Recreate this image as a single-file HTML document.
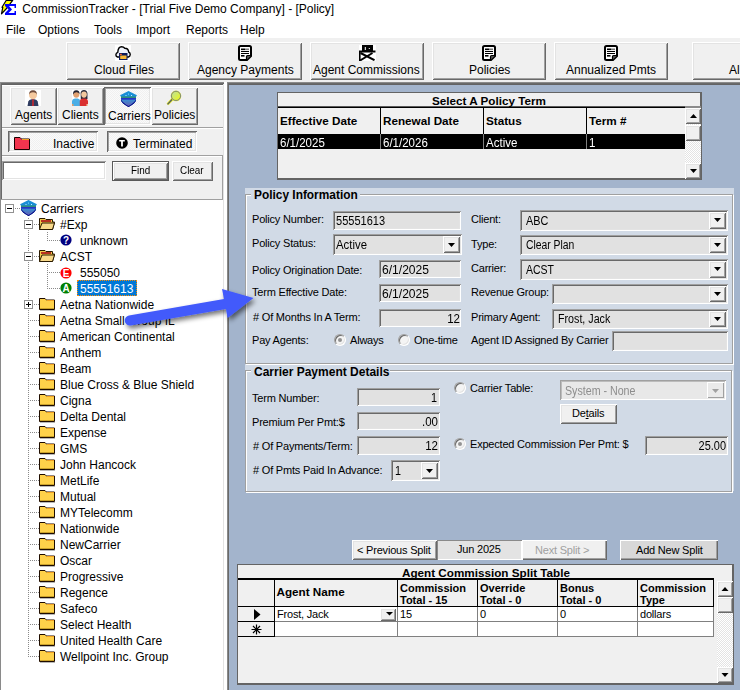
<!DOCTYPE html>
<html><head><meta charset="utf-8">
<style>
*{margin:0;padding:0;box-sizing:border-box}
html,body{width:740px;height:690px;overflow:hidden;background:#fff}
body{font-family:"Liberation Sans",sans-serif;color:#000;position:relative}
.a{position:absolute}
.t{position:absolute;white-space:nowrap;line-height:1}
.raised{background:#f0f0f0;box-shadow:inset 1px 1px #fff,inset -1px -1px #696969,inset 2px 2px #e3e3e3,inset -2px -2px #a0a0a0}
.sunken{box-shadow:inset 1px 1px #a0a0a0,inset -1px -1px #fff,inset 2px 2px #696969,inset -2px -2px #e3e3e3}
.pressed{background-color:#fafafa;background-image:linear-gradient(45deg,#f0f0f0 25%,transparent 25%,transparent 75%,#f0f0f0 75%),linear-gradient(45deg,#f0f0f0 25%,transparent 25%,transparent 75%,#f0f0f0 75%);background-size:2px 2px;background-position:0 0,1px 1px;box-shadow:inset 1px 1px #696969,inset -1px -1px #fff,inset 2px 2px #a0a0a0,inset -2px -2px #e3e3e3}
.ui{font-size:12px}
.tree{font-size:12px}
.f11{font-size:11px;letter-spacing:-0.2px}
.v12{font-size:12px;transform-origin:0 0}
.b12{font-size:11.7px;font-weight:bold}
.tb{background:#e1e1e1;box-shadow:inset 1px 1px #a0a0a0,inset -1px -1px #fff,inset 2px 2px #696969,inset -2px -2px #e3e3e3}
.etch{border:1px solid #a0a0a0;box-shadow:inset 1px 1px #fff,1px 1px #fff}
.radio{width:12px;height:12px;border-radius:6px;background:#f4f4f4;border:1px solid;border-color:#a0a0a0 #fff #fff #a0a0a0;box-shadow:inset 1px 1px #696969,inset -1px -1px #e3e3e3}
.dith{background-color:#fff;background-image:linear-gradient(45deg,#e3e3e3 25%,transparent 25%,transparent 75%,#e3e3e3 75%),linear-gradient(45deg,#e3e3e3 25%,transparent 25%,transparent 75%,#e3e3e3 75%);background-size:2px 2px;background-position:0 0,1px 1px}
</style></head><body>

<!-- title bar -->
<div class="a" style="left:0;top:0;width:740px;height:38px;background:#fff"></div>
<svg class="a" style="left:0;top:0" width="18" height="16" viewBox="0 0 18 16">
  <path d="M6.3 0.3 H12.7 L6.5 8.5 L1.5 13.8 L2.8 7.3 L2 7.3 Z" fill="#ffff00" stroke="#000" stroke-width="1.2" stroke-linejoin="round"/>
  <path d="M5 4 H16 V8 H14.5 V6 H9 L12 9.5 L8.5 13 H14.5 V11 H16 V15 H5 V13 L8.5 9.5 L5 6 Z" fill="#0000ff"/>
</svg>
<div class="t ui" style="left:22.3px;top:3px">CommissionTracker - [Trial Five Demo Company] - [Policy]</div>
<div class="t ui" style="left:6px;top:24px">File</div>
<div class="t ui" style="left:38px;top:24px">Options</div>
<div class="t ui" style="left:94px;top:24px">Tools</div>
<div class="t ui" style="left:136px;top:24px">Import</div>
<div class="t ui" style="left:186px;top:24px">Reports</div>
<div class="t ui" style="left:240px;top:24px">Help</div>

<!-- toolbar -->
<div class="a" style="left:0;top:38px;width:740px;height:44px;background:#f0f0f0"></div>
<div class="a raised" style="left:66px;top:42px;width:114px;height:38px"></div>
<div class="a raised" style="left:188px;top:42px;width:114px;height:38px"></div>
<div class="a raised" style="left:310px;top:42px;width:114px;height:38px"></div>
<div class="a raised" style="left:432px;top:42px;width:114px;height:38px"></div>
<div class="a raised" style="left:554px;top:42px;width:114px;height:38px"></div>
<div class="a raised" style="left:692px;top:42px;width:114px;height:38px"></div>
<div class="t ui" style="left:94px;top:64px">Cloud Files</div>
<div class="t ui" style="left:197px;top:64px">Agency Payments</div>
<div class="t ui" style="left:313px;top:64px">Agent Commissions</div>
<div class="t ui" style="left:469px;top:64px">Policies</div>
<div class="t ui" style="left:566px;top:64px">Annualized Pmts</div>
<div class="t ui" style="left:729px;top:64px">Al</div>


<!-- left panel -->
<div class="a" style="left:0;top:82px;width:224px;height:608px;background:#f0f0f0;box-shadow:inset 1px 1px #8a8a8a,inset 2px 2px #6a6a6a"></div>
<div class="a" style="left:1px;top:84px;width:222px;height:1px;background:#636363"></div>
<div class="a" style="left:2px;top:85px;width:221px;height:1px;background:#fff"></div>
<div class="a" style="left:223px;top:84px;width:1px;height:606px;background:#e3e3e3"></div>
<div class="a" style="left:224px;top:82px;width:3px;height:608px;background:#fff"></div>

<div class="a raised" style="left:10px;top:87px;width:47px;height:38px"></div>
<div class="a raised" style="left:57px;top:87px;width:47px;height:38px"></div>
<div class="a pressed" style="left:104px;top:87px;width:47px;height:38px"></div>
<div class="a raised" style="left:151px;top:87px;width:47px;height:38px"></div>
<div class="t ui" style="left:15px;top:109px">Agents</div>
<div class="t ui" style="left:62px;top:109px">Clients</div>
<div class="t ui" style="left:108px;top:110px">Carriers</div>
<div class="t ui" style="left:154px;top:109px">Policies</div>

<div class="a" style="left:2px;top:127px;width:221px;height:1px;background:#a0a0a0"></div>
<div class="a" style="left:2px;top:128px;width:221px;height:1px;background:#fff"></div>

<div class="a pressed" style="left:8px;top:131px;width:90px;height:21px"></div>
<div class="a pressed" style="left:107px;top:131px;width:90px;height:21px"></div>
<div class="t ui" style="left:53px;top:137.5px">Inactive</div>
<div class="t ui" style="left:133px;top:137.5px">Terminated</div>

<div class="a" style="left:2px;top:155px;width:221px;height:1px;background:#a0a0a0"></div>
<div class="a" style="left:2px;top:156px;width:221px;height:1px;background:#fff"></div>
<div class="a" style="left:222px;top:155px;width:1px;height:44px;background:#a0a0a0"></div>

<div class="a sunken" style="left:2px;top:161px;width:104px;height:19px;background:#fff"></div>
<div class="a" style="left:112px;top:161px;width:57px;height:20px;background:#5a5a5a"></div>
<div class="a raised" style="left:113px;top:162px;width:55px;height:18px"></div>
<div class="a raised" style="left:172px;top:161px;width:41px;height:20px"></div>
<div class="t" style="left:131px;top:165px;font-size:11.5px;transform:scaleX(0.86);transform-origin:0 0">Find</div>
<div class="t" style="left:180px;top:165px;font-size:11.5px;transform:scaleX(0.86);transform-origin:0 0">Clear</div>

<!-- tree -->
<div class="a" style="left:1px;top:199px;width:222px;height:491px;background:#fff;border-top:1px solid #a0a0a0"></div>
<svg class="a" style="left:0;top:0" width="224" height="690" fill="#8a8a8a"><rect x="28" y="218" width="1" height="1"/><rect x="28" y="220" width="1" height="1"/><rect x="28" y="222" width="1" height="1"/><rect x="28" y="224" width="1" height="1"/><rect x="28" y="226" width="1" height="1"/><rect x="28" y="228" width="1" height="1"/><rect x="28" y="230" width="1" height="1"/><rect x="28" y="232" width="1" height="1"/><rect x="28" y="234" width="1" height="1"/><rect x="28" y="236" width="1" height="1"/><rect x="28" y="238" width="1" height="1"/><rect x="28" y="240" width="1" height="1"/><rect x="28" y="242" width="1" height="1"/><rect x="28" y="244" width="1" height="1"/><rect x="28" y="246" width="1" height="1"/><rect x="28" y="248" width="1" height="1"/><rect x="28" y="250" width="1" height="1"/><rect x="28" y="252" width="1" height="1"/><rect x="28" y="254" width="1" height="1"/><rect x="28" y="256" width="1" height="1"/><rect x="28" y="258" width="1" height="1"/><rect x="28" y="260" width="1" height="1"/><rect x="28" y="262" width="1" height="1"/><rect x="28" y="264" width="1" height="1"/><rect x="28" y="266" width="1" height="1"/><rect x="28" y="268" width="1" height="1"/><rect x="28" y="270" width="1" height="1"/><rect x="28" y="272" width="1" height="1"/><rect x="28" y="274" width="1" height="1"/><rect x="28" y="276" width="1" height="1"/><rect x="28" y="278" width="1" height="1"/><rect x="28" y="280" width="1" height="1"/><rect x="28" y="282" width="1" height="1"/><rect x="28" y="284" width="1" height="1"/><rect x="28" y="286" width="1" height="1"/><rect x="28" y="288" width="1" height="1"/><rect x="28" y="290" width="1" height="1"/><rect x="28" y="292" width="1" height="1"/><rect x="28" y="294" width="1" height="1"/><rect x="28" y="296" width="1" height="1"/><rect x="28" y="298" width="1" height="1"/><rect x="28" y="300" width="1" height="1"/><rect x="28" y="302" width="1" height="1"/><rect x="28" y="304" width="1" height="1"/><rect x="28" y="306" width="1" height="1"/><rect x="28" y="308" width="1" height="1"/><rect x="28" y="310" width="1" height="1"/><rect x="28" y="312" width="1" height="1"/><rect x="28" y="314" width="1" height="1"/><rect x="28" y="316" width="1" height="1"/><rect x="28" y="318" width="1" height="1"/><rect x="28" y="320" width="1" height="1"/><rect x="28" y="322" width="1" height="1"/><rect x="28" y="324" width="1" height="1"/><rect x="28" y="326" width="1" height="1"/><rect x="28" y="328" width="1" height="1"/><rect x="28" y="330" width="1" height="1"/><rect x="28" y="332" width="1" height="1"/><rect x="28" y="334" width="1" height="1"/><rect x="28" y="336" width="1" height="1"/><rect x="28" y="338" width="1" height="1"/><rect x="28" y="340" width="1" height="1"/><rect x="28" y="342" width="1" height="1"/><rect x="28" y="344" width="1" height="1"/><rect x="28" y="346" width="1" height="1"/><rect x="28" y="348" width="1" height="1"/><rect x="28" y="350" width="1" height="1"/><rect x="28" y="352" width="1" height="1"/><rect x="28" y="354" width="1" height="1"/><rect x="28" y="356" width="1" height="1"/><rect x="28" y="358" width="1" height="1"/><rect x="28" y="360" width="1" height="1"/><rect x="28" y="362" width="1" height="1"/><rect x="28" y="364" width="1" height="1"/><rect x="28" y="366" width="1" height="1"/><rect x="28" y="368" width="1" height="1"/><rect x="28" y="370" width="1" height="1"/><rect x="28" y="372" width="1" height="1"/><rect x="28" y="374" width="1" height="1"/><rect x="28" y="376" width="1" height="1"/><rect x="28" y="378" width="1" height="1"/><rect x="28" y="380" width="1" height="1"/><rect x="28" y="382" width="1" height="1"/><rect x="28" y="384" width="1" height="1"/><rect x="28" y="386" width="1" height="1"/><rect x="28" y="388" width="1" height="1"/><rect x="28" y="390" width="1" height="1"/><rect x="28" y="392" width="1" height="1"/><rect x="28" y="394" width="1" height="1"/><rect x="28" y="396" width="1" height="1"/><rect x="28" y="398" width="1" height="1"/><rect x="28" y="400" width="1" height="1"/><rect x="28" y="402" width="1" height="1"/><rect x="28" y="404" width="1" height="1"/><rect x="28" y="406" width="1" height="1"/><rect x="28" y="408" width="1" height="1"/><rect x="28" y="410" width="1" height="1"/><rect x="28" y="412" width="1" height="1"/><rect x="28" y="414" width="1" height="1"/><rect x="28" y="416" width="1" height="1"/><rect x="28" y="418" width="1" height="1"/><rect x="28" y="420" width="1" height="1"/><rect x="28" y="422" width="1" height="1"/><rect x="28" y="424" width="1" height="1"/><rect x="28" y="426" width="1" height="1"/><rect x="28" y="428" width="1" height="1"/><rect x="28" y="430" width="1" height="1"/><rect x="28" y="432" width="1" height="1"/><rect x="28" y="434" width="1" height="1"/><rect x="28" y="436" width="1" height="1"/><rect x="28" y="438" width="1" height="1"/><rect x="28" y="440" width="1" height="1"/><rect x="28" y="442" width="1" height="1"/><rect x="28" y="444" width="1" height="1"/><rect x="28" y="446" width="1" height="1"/><rect x="28" y="448" width="1" height="1"/><rect x="28" y="450" width="1" height="1"/><rect x="28" y="452" width="1" height="1"/><rect x="28" y="454" width="1" height="1"/><rect x="28" y="456" width="1" height="1"/><rect x="28" y="458" width="1" height="1"/><rect x="28" y="460" width="1" height="1"/><rect x="28" y="462" width="1" height="1"/><rect x="28" y="464" width="1" height="1"/><rect x="28" y="466" width="1" height="1"/><rect x="28" y="468" width="1" height="1"/><rect x="28" y="470" width="1" height="1"/><rect x="28" y="472" width="1" height="1"/><rect x="28" y="474" width="1" height="1"/><rect x="28" y="476" width="1" height="1"/><rect x="28" y="478" width="1" height="1"/><rect x="28" y="480" width="1" height="1"/><rect x="28" y="482" width="1" height="1"/><rect x="28" y="484" width="1" height="1"/><rect x="28" y="486" width="1" height="1"/><rect x="28" y="488" width="1" height="1"/><rect x="28" y="490" width="1" height="1"/><rect x="28" y="492" width="1" height="1"/><rect x="28" y="494" width="1" height="1"/><rect x="28" y="496" width="1" height="1"/><rect x="28" y="498" width="1" height="1"/><rect x="28" y="500" width="1" height="1"/><rect x="28" y="502" width="1" height="1"/><rect x="28" y="504" width="1" height="1"/><rect x="28" y="506" width="1" height="1"/><rect x="28" y="508" width="1" height="1"/><rect x="28" y="510" width="1" height="1"/><rect x="28" y="512" width="1" height="1"/><rect x="28" y="514" width="1" height="1"/><rect x="28" y="516" width="1" height="1"/><rect x="28" y="518" width="1" height="1"/><rect x="28" y="520" width="1" height="1"/><rect x="28" y="522" width="1" height="1"/><rect x="28" y="524" width="1" height="1"/><rect x="28" y="526" width="1" height="1"/><rect x="28" y="528" width="1" height="1"/><rect x="28" y="530" width="1" height="1"/><rect x="28" y="532" width="1" height="1"/><rect x="28" y="534" width="1" height="1"/><rect x="28" y="536" width="1" height="1"/><rect x="28" y="538" width="1" height="1"/><rect x="28" y="540" width="1" height="1"/><rect x="28" y="542" width="1" height="1"/><rect x="28" y="544" width="1" height="1"/><rect x="28" y="546" width="1" height="1"/><rect x="28" y="548" width="1" height="1"/><rect x="28" y="550" width="1" height="1"/><rect x="28" y="552" width="1" height="1"/><rect x="28" y="554" width="1" height="1"/><rect x="28" y="556" width="1" height="1"/><rect x="28" y="558" width="1" height="1"/><rect x="28" y="560" width="1" height="1"/><rect x="28" y="562" width="1" height="1"/><rect x="28" y="564" width="1" height="1"/><rect x="28" y="566" width="1" height="1"/><rect x="28" y="568" width="1" height="1"/><rect x="28" y="570" width="1" height="1"/><rect x="28" y="572" width="1" height="1"/><rect x="28" y="574" width="1" height="1"/><rect x="28" y="576" width="1" height="1"/><rect x="28" y="578" width="1" height="1"/><rect x="28" y="580" width="1" height="1"/><rect x="28" y="582" width="1" height="1"/><rect x="28" y="584" width="1" height="1"/><rect x="28" y="586" width="1" height="1"/><rect x="28" y="588" width="1" height="1"/><rect x="28" y="590" width="1" height="1"/><rect x="28" y="592" width="1" height="1"/><rect x="28" y="594" width="1" height="1"/><rect x="28" y="596" width="1" height="1"/><rect x="28" y="598" width="1" height="1"/><rect x="28" y="600" width="1" height="1"/><rect x="28" y="602" width="1" height="1"/><rect x="28" y="604" width="1" height="1"/><rect x="28" y="606" width="1" height="1"/><rect x="28" y="608" width="1" height="1"/><rect x="28" y="610" width="1" height="1"/><rect x="28" y="612" width="1" height="1"/><rect x="28" y="614" width="1" height="1"/><rect x="28" y="616" width="1" height="1"/><rect x="28" y="618" width="1" height="1"/><rect x="28" y="620" width="1" height="1"/><rect x="28" y="622" width="1" height="1"/><rect x="28" y="624" width="1" height="1"/><rect x="28" y="626" width="1" height="1"/><rect x="28" y="628" width="1" height="1"/><rect x="28" y="630" width="1" height="1"/><rect x="28" y="632" width="1" height="1"/><rect x="28" y="634" width="1" height="1"/><rect x="28" y="636" width="1" height="1"/><rect x="28" y="638" width="1" height="1"/><rect x="28" y="640" width="1" height="1"/><rect x="28" y="642" width="1" height="1"/><rect x="28" y="644" width="1" height="1"/><rect x="28" y="646" width="1" height="1"/><rect x="28" y="648" width="1" height="1"/><rect x="28" y="650" width="1" height="1"/><rect x="28" y="652" width="1" height="1"/><rect x="28" y="654" width="1" height="1"/><rect x="28" y="656" width="1" height="1"/><rect x="47" y="232" width="1" height="1"/><rect x="47" y="234" width="1" height="1"/><rect x="47" y="236" width="1" height="1"/><rect x="47" y="238" width="1" height="1"/><rect x="47" y="240" width="1" height="1"/><rect x="47" y="264" width="1" height="1"/><rect x="47" y="266" width="1" height="1"/><rect x="47" y="268" width="1" height="1"/><rect x="47" y="270" width="1" height="1"/><rect x="47" y="272" width="1" height="1"/><rect x="47" y="274" width="1" height="1"/><rect x="47" y="276" width="1" height="1"/><rect x="47" y="278" width="1" height="1"/><rect x="47" y="280" width="1" height="1"/><rect x="47" y="282" width="1" height="1"/><rect x="47" y="284" width="1" height="1"/><rect x="47" y="286" width="1" height="1"/><rect x="47" y="288" width="1" height="1"/><rect x="15" y="208" width="1" height="1"/><rect x="17" y="208" width="1" height="1"/><rect x="19" y="208" width="1" height="1"/><rect x="34" y="224" width="1" height="1"/><rect x="36" y="224" width="1" height="1"/><rect x="38" y="224" width="1" height="1"/><rect x="49" y="240" width="1" height="1"/><rect x="51" y="240" width="1" height="1"/><rect x="53" y="240" width="1" height="1"/><rect x="55" y="240" width="1" height="1"/><rect x="57" y="240" width="1" height="1"/><rect x="59" y="240" width="1" height="1"/><rect x="34" y="256" width="1" height="1"/><rect x="36" y="256" width="1" height="1"/><rect x="38" y="256" width="1" height="1"/><rect x="49" y="272" width="1" height="1"/><rect x="51" y="272" width="1" height="1"/><rect x="53" y="272" width="1" height="1"/><rect x="55" y="272" width="1" height="1"/><rect x="57" y="272" width="1" height="1"/><rect x="59" y="272" width="1" height="1"/><rect x="49" y="288" width="1" height="1"/><rect x="51" y="288" width="1" height="1"/><rect x="53" y="288" width="1" height="1"/><rect x="55" y="288" width="1" height="1"/><rect x="57" y="288" width="1" height="1"/><rect x="59" y="288" width="1" height="1"/><rect x="34" y="304" width="1" height="1"/><rect x="36" y="304" width="1" height="1"/><rect x="38" y="304" width="1" height="1"/><rect x="30" y="320" width="1" height="1"/><rect x="32" y="320" width="1" height="1"/><rect x="34" y="320" width="1" height="1"/><rect x="36" y="320" width="1" height="1"/><rect x="38" y="320" width="1" height="1"/><rect x="30" y="336" width="1" height="1"/><rect x="32" y="336" width="1" height="1"/><rect x="34" y="336" width="1" height="1"/><rect x="36" y="336" width="1" height="1"/><rect x="38" y="336" width="1" height="1"/><rect x="30" y="352" width="1" height="1"/><rect x="32" y="352" width="1" height="1"/><rect x="34" y="352" width="1" height="1"/><rect x="36" y="352" width="1" height="1"/><rect x="38" y="352" width="1" height="1"/><rect x="30" y="368" width="1" height="1"/><rect x="32" y="368" width="1" height="1"/><rect x="34" y="368" width="1" height="1"/><rect x="36" y="368" width="1" height="1"/><rect x="38" y="368" width="1" height="1"/><rect x="30" y="384" width="1" height="1"/><rect x="32" y="384" width="1" height="1"/><rect x="34" y="384" width="1" height="1"/><rect x="36" y="384" width="1" height="1"/><rect x="38" y="384" width="1" height="1"/><rect x="30" y="400" width="1" height="1"/><rect x="32" y="400" width="1" height="1"/><rect x="34" y="400" width="1" height="1"/><rect x="36" y="400" width="1" height="1"/><rect x="38" y="400" width="1" height="1"/><rect x="30" y="416" width="1" height="1"/><rect x="32" y="416" width="1" height="1"/><rect x="34" y="416" width="1" height="1"/><rect x="36" y="416" width="1" height="1"/><rect x="38" y="416" width="1" height="1"/><rect x="30" y="432" width="1" height="1"/><rect x="32" y="432" width="1" height="1"/><rect x="34" y="432" width="1" height="1"/><rect x="36" y="432" width="1" height="1"/><rect x="38" y="432" width="1" height="1"/><rect x="30" y="448" width="1" height="1"/><rect x="32" y="448" width="1" height="1"/><rect x="34" y="448" width="1" height="1"/><rect x="36" y="448" width="1" height="1"/><rect x="38" y="448" width="1" height="1"/><rect x="30" y="464" width="1" height="1"/><rect x="32" y="464" width="1" height="1"/><rect x="34" y="464" width="1" height="1"/><rect x="36" y="464" width="1" height="1"/><rect x="38" y="464" width="1" height="1"/><rect x="30" y="480" width="1" height="1"/><rect x="32" y="480" width="1" height="1"/><rect x="34" y="480" width="1" height="1"/><rect x="36" y="480" width="1" height="1"/><rect x="38" y="480" width="1" height="1"/><rect x="30" y="496" width="1" height="1"/><rect x="32" y="496" width="1" height="1"/><rect x="34" y="496" width="1" height="1"/><rect x="36" y="496" width="1" height="1"/><rect x="38" y="496" width="1" height="1"/><rect x="30" y="512" width="1" height="1"/><rect x="32" y="512" width="1" height="1"/><rect x="34" y="512" width="1" height="1"/><rect x="36" y="512" width="1" height="1"/><rect x="38" y="512" width="1" height="1"/><rect x="30" y="528" width="1" height="1"/><rect x="32" y="528" width="1" height="1"/><rect x="34" y="528" width="1" height="1"/><rect x="36" y="528" width="1" height="1"/><rect x="38" y="528" width="1" height="1"/><rect x="30" y="544" width="1" height="1"/><rect x="32" y="544" width="1" height="1"/><rect x="34" y="544" width="1" height="1"/><rect x="36" y="544" width="1" height="1"/><rect x="38" y="544" width="1" height="1"/><rect x="30" y="560" width="1" height="1"/><rect x="32" y="560" width="1" height="1"/><rect x="34" y="560" width="1" height="1"/><rect x="36" y="560" width="1" height="1"/><rect x="38" y="560" width="1" height="1"/><rect x="30" y="576" width="1" height="1"/><rect x="32" y="576" width="1" height="1"/><rect x="34" y="576" width="1" height="1"/><rect x="36" y="576" width="1" height="1"/><rect x="38" y="576" width="1" height="1"/><rect x="30" y="592" width="1" height="1"/><rect x="32" y="592" width="1" height="1"/><rect x="34" y="592" width="1" height="1"/><rect x="36" y="592" width="1" height="1"/><rect x="38" y="592" width="1" height="1"/><rect x="30" y="608" width="1" height="1"/><rect x="32" y="608" width="1" height="1"/><rect x="34" y="608" width="1" height="1"/><rect x="36" y="608" width="1" height="1"/><rect x="38" y="608" width="1" height="1"/><rect x="30" y="624" width="1" height="1"/><rect x="32" y="624" width="1" height="1"/><rect x="34" y="624" width="1" height="1"/><rect x="36" y="624" width="1" height="1"/><rect x="38" y="624" width="1" height="1"/><rect x="30" y="640" width="1" height="1"/><rect x="32" y="640" width="1" height="1"/><rect x="34" y="640" width="1" height="1"/><rect x="36" y="640" width="1" height="1"/><rect x="38" y="640" width="1" height="1"/><rect x="30" y="656" width="1" height="1"/><rect x="32" y="656" width="1" height="1"/><rect x="34" y="656" width="1" height="1"/><rect x="36" y="656" width="1" height="1"/><rect x="38" y="656" width="1" height="1"/><rect x="5.5" y="204.5" width="8" height="8" fill="#fff" stroke="#919191" stroke-width="1"/><rect x="7" y="208" width="5" height="1" fill="#000"/><rect x="24.5" y="220.5" width="8" height="8" fill="#fff" stroke="#919191" stroke-width="1"/><rect x="26" y="224" width="5" height="1" fill="#000"/><rect x="24.5" y="252.5" width="8" height="8" fill="#fff" stroke="#919191" stroke-width="1"/><rect x="26" y="256" width="5" height="1" fill="#000"/><rect x="24.5" y="300.5" width="8" height="8" fill="#fff" stroke="#919191" stroke-width="1"/><rect x="26" y="304" width="5" height="1" fill="#000"/><rect x="28" y="302" width="1" height="5" fill="#000"/></svg>
<div class="t tree" style="left:41px;top:203px">Carriers</div>
<svg class="a" style="left:20px;top:200px" width="17" height="16" viewBox="0 0 17 16"><defs><clipPath id="shA"><path d="M8.5 0 L17 4.3 L16 5.5 L16 9.5 Q15 12.5 8.5 16 Q2 12.5 1 9.5 L1 5.5 L0 4.3 Z"/></clipPath><linearGradient id="shAg" x1="0" y1="0" x2="0" y2="1"><stop offset="0" stop-color="#3a90d2"/><stop offset="1" stop-color="#6858b0"/></linearGradient></defs><g clip-path="url(#shA)"><rect width="17" height="16" fill="#1a8ed6"/><rect y="5.5" width="17" height="1.6" fill="#2f8f7a"/><rect y="7.3" width="17" height="1.4" fill="#2a10c0"/><rect y="8.7" width="17" height="7.3" fill="url(#shAg)"/><path d="M1 9.5 Q2 12.5 8.5 16 Q15 12.5 16 9.5" fill="none" stroke="#000080" stroke-width="1.6"/></g><rect x="5.5" y="4" width="1" height="1" fill="#bfefff"/><rect x="11" y="4" width="1" height="1" fill="#bfefff"/><rect x="8" y="2.6" width="1" height="1" fill="#7fdfff"/></svg>
<div class="t tree" style="left:60px;top:219px">#Exp</div>
<svg class="a" style="left:39px;top:218px" width="16" height="12" viewBox="0 0 16 12"><path d="M0.5 0.5 H6 L7 1.5 H13.5 V4 H15.5 L13.5 11.5 H0.5 Z" fill="#f2c94c" stroke="#2a1a00" stroke-width="1"/><rect x="2" y="2" width="10" height="2" fill="#b83020"/><path d="M0.5 11.5 L3 5 H15.5 L13.5 11.5 Z" fill="#f8d98a" stroke="#2a1a00" stroke-width="1"/></svg>
<div class="t tree" style="left:80px;top:235px">unknown</div>
<svg class="a" style="left:60px;top:234px" width="12" height="12" viewBox="0 0 12 12"><circle cx="6" cy="6" r="5.6" fill="#000080"/><text x="6" y="9.6" font-family="Liberation Sans" font-weight="bold" font-size="10" fill="#fff" text-anchor="middle">?</text></svg>
<div class="t tree" style="left:60px;top:251px">ACST</div>
<svg class="a" style="left:39px;top:250px" width="16" height="12" viewBox="0 0 16 12"><path d="M0.5 0.5 H6 L7 1.5 H13.5 V4 H15.5 L13.5 11.5 H0.5 Z" fill="#f2c94c" stroke="#2a1a00" stroke-width="1"/><rect x="2" y="2" width="10" height="2" fill="#b83020"/><path d="M0.5 11.5 L3 5 H15.5 L13.5 11.5 Z" fill="#f8d98a" stroke="#2a1a00" stroke-width="1"/></svg>
<div class="t tree" style="left:80px;top:267px">555050</div>
<svg class="a" style="left:60px;top:267px" width="12" height="12" viewBox="0 0 12 12"><circle cx="6" cy="6" r="5.6" fill="#ff0000"/><text x="6" y="9.6" font-family="Liberation Sans" font-weight="bold" font-size="10" fill="#fff" text-anchor="middle">E</text></svg>
<div class="a" style="left:77px;top:280px;width:60px;height:16px;background:#0078d7;outline:1px dotted #ff8c00;outline-offset:-1px"></div>
<div class="t tree" style="left:80px;top:283px;color:#fff">55551613</div>
<svg class="a" style="left:60px;top:282px" width="12" height="12" viewBox="0 0 12 12"><circle cx="6" cy="6" r="5.6" fill="#008000"/><text x="6" y="9.6" font-family="Liberation Sans" font-weight="bold" font-size="10" fill="#fff" text-anchor="middle">A</text></svg>
<div class="t tree" style="left:60px;top:299px">Aetna Nationwide</div>
<svg class="a" style="left:39px;top:298px" width="16" height="13" viewBox="0 0 16 13"><path d="M0.5 0.5 H6 L7.5 2 H15.5 V11.5 H0.5 Z" fill="#ffd24a" stroke="#1e0c00" stroke-width="1"/><rect x="8" y="2" width="7" height="1" fill="#f0a020"/><rect x="1" y="10" width="14" height="1" fill="#c9a12a"/><rect x="1" y="12" width="15" height="1" fill="#b8b8b8"/></svg>
<div class="t tree" style="left:60px;top:315px">Aetna Small Group IL</div>
<svg class="a" style="left:39px;top:314px" width="16" height="13" viewBox="0 0 16 13"><path d="M0.5 0.5 H6 L7.5 2 H15.5 V11.5 H0.5 Z" fill="#ffd24a" stroke="#1e0c00" stroke-width="1"/><rect x="8" y="2" width="7" height="1" fill="#f0a020"/><rect x="1" y="10" width="14" height="1" fill="#c9a12a"/><rect x="1" y="12" width="15" height="1" fill="#b8b8b8"/></svg>
<div class="t tree" style="left:60px;top:331px">American Continental</div>
<svg class="a" style="left:39px;top:330px" width="16" height="13" viewBox="0 0 16 13"><path d="M0.5 0.5 H6 L7.5 2 H15.5 V11.5 H0.5 Z" fill="#ffd24a" stroke="#1e0c00" stroke-width="1"/><rect x="8" y="2" width="7" height="1" fill="#f0a020"/><rect x="1" y="10" width="14" height="1" fill="#c9a12a"/><rect x="1" y="12" width="15" height="1" fill="#b8b8b8"/></svg>
<div class="t tree" style="left:60px;top:347px">Anthem</div>
<svg class="a" style="left:39px;top:346px" width="16" height="13" viewBox="0 0 16 13"><path d="M0.5 0.5 H6 L7.5 2 H15.5 V11.5 H0.5 Z" fill="#ffd24a" stroke="#1e0c00" stroke-width="1"/><rect x="8" y="2" width="7" height="1" fill="#f0a020"/><rect x="1" y="10" width="14" height="1" fill="#c9a12a"/><rect x="1" y="12" width="15" height="1" fill="#b8b8b8"/></svg>
<div class="t tree" style="left:60px;top:363px">Beam</div>
<svg class="a" style="left:39px;top:362px" width="16" height="13" viewBox="0 0 16 13"><path d="M0.5 0.5 H6 L7.5 2 H15.5 V11.5 H0.5 Z" fill="#ffd24a" stroke="#1e0c00" stroke-width="1"/><rect x="8" y="2" width="7" height="1" fill="#f0a020"/><rect x="1" y="10" width="14" height="1" fill="#c9a12a"/><rect x="1" y="12" width="15" height="1" fill="#b8b8b8"/></svg>
<div class="t tree" style="left:60px;top:379px">Blue Cross &amp; Blue Shield</div>
<svg class="a" style="left:39px;top:378px" width="16" height="13" viewBox="0 0 16 13"><path d="M0.5 0.5 H6 L7.5 2 H15.5 V11.5 H0.5 Z" fill="#ffd24a" stroke="#1e0c00" stroke-width="1"/><rect x="8" y="2" width="7" height="1" fill="#f0a020"/><rect x="1" y="10" width="14" height="1" fill="#c9a12a"/><rect x="1" y="12" width="15" height="1" fill="#b8b8b8"/></svg>
<div class="t tree" style="left:60px;top:395px">Cigna</div>
<svg class="a" style="left:39px;top:394px" width="16" height="13" viewBox="0 0 16 13"><path d="M0.5 0.5 H6 L7.5 2 H15.5 V11.5 H0.5 Z" fill="#ffd24a" stroke="#1e0c00" stroke-width="1"/><rect x="8" y="2" width="7" height="1" fill="#f0a020"/><rect x="1" y="10" width="14" height="1" fill="#c9a12a"/><rect x="1" y="12" width="15" height="1" fill="#b8b8b8"/></svg>
<div class="t tree" style="left:60px;top:411px">Delta Dental</div>
<svg class="a" style="left:39px;top:410px" width="16" height="13" viewBox="0 0 16 13"><path d="M0.5 0.5 H6 L7.5 2 H15.5 V11.5 H0.5 Z" fill="#ffd24a" stroke="#1e0c00" stroke-width="1"/><rect x="8" y="2" width="7" height="1" fill="#f0a020"/><rect x="1" y="10" width="14" height="1" fill="#c9a12a"/><rect x="1" y="12" width="15" height="1" fill="#b8b8b8"/></svg>
<div class="t tree" style="left:60px;top:427px">Expense</div>
<svg class="a" style="left:39px;top:426px" width="16" height="13" viewBox="0 0 16 13"><path d="M0.5 0.5 H6 L7.5 2 H15.5 V11.5 H0.5 Z" fill="#ffd24a" stroke="#1e0c00" stroke-width="1"/><rect x="8" y="2" width="7" height="1" fill="#f0a020"/><rect x="1" y="10" width="14" height="1" fill="#c9a12a"/><rect x="1" y="12" width="15" height="1" fill="#b8b8b8"/></svg>
<div class="t tree" style="left:60px;top:443px">GMS</div>
<svg class="a" style="left:39px;top:442px" width="16" height="13" viewBox="0 0 16 13"><path d="M0.5 0.5 H6 L7.5 2 H15.5 V11.5 H0.5 Z" fill="#ffd24a" stroke="#1e0c00" stroke-width="1"/><rect x="8" y="2" width="7" height="1" fill="#f0a020"/><rect x="1" y="10" width="14" height="1" fill="#c9a12a"/><rect x="1" y="12" width="15" height="1" fill="#b8b8b8"/></svg>
<div class="t tree" style="left:60px;top:459px">John Hancock</div>
<svg class="a" style="left:39px;top:458px" width="16" height="13" viewBox="0 0 16 13"><path d="M0.5 0.5 H6 L7.5 2 H15.5 V11.5 H0.5 Z" fill="#ffd24a" stroke="#1e0c00" stroke-width="1"/><rect x="8" y="2" width="7" height="1" fill="#f0a020"/><rect x="1" y="10" width="14" height="1" fill="#c9a12a"/><rect x="1" y="12" width="15" height="1" fill="#b8b8b8"/></svg>
<div class="t tree" style="left:60px;top:475px">MetLife</div>
<svg class="a" style="left:39px;top:474px" width="16" height="13" viewBox="0 0 16 13"><path d="M0.5 0.5 H6 L7.5 2 H15.5 V11.5 H0.5 Z" fill="#ffd24a" stroke="#1e0c00" stroke-width="1"/><rect x="8" y="2" width="7" height="1" fill="#f0a020"/><rect x="1" y="10" width="14" height="1" fill="#c9a12a"/><rect x="1" y="12" width="15" height="1" fill="#b8b8b8"/></svg>
<div class="t tree" style="left:60px;top:491px">Mutual</div>
<svg class="a" style="left:39px;top:490px" width="16" height="13" viewBox="0 0 16 13"><path d="M0.5 0.5 H6 L7.5 2 H15.5 V11.5 H0.5 Z" fill="#ffd24a" stroke="#1e0c00" stroke-width="1"/><rect x="8" y="2" width="7" height="1" fill="#f0a020"/><rect x="1" y="10" width="14" height="1" fill="#c9a12a"/><rect x="1" y="12" width="15" height="1" fill="#b8b8b8"/></svg>
<div class="t tree" style="left:60px;top:507px">MYTelecomm</div>
<svg class="a" style="left:39px;top:506px" width="16" height="13" viewBox="0 0 16 13"><path d="M0.5 0.5 H6 L7.5 2 H15.5 V11.5 H0.5 Z" fill="#ffd24a" stroke="#1e0c00" stroke-width="1"/><rect x="8" y="2" width="7" height="1" fill="#f0a020"/><rect x="1" y="10" width="14" height="1" fill="#c9a12a"/><rect x="1" y="12" width="15" height="1" fill="#b8b8b8"/></svg>
<div class="t tree" style="left:60px;top:523px">Nationwide</div>
<svg class="a" style="left:39px;top:522px" width="16" height="13" viewBox="0 0 16 13"><path d="M0.5 0.5 H6 L7.5 2 H15.5 V11.5 H0.5 Z" fill="#ffd24a" stroke="#1e0c00" stroke-width="1"/><rect x="8" y="2" width="7" height="1" fill="#f0a020"/><rect x="1" y="10" width="14" height="1" fill="#c9a12a"/><rect x="1" y="12" width="15" height="1" fill="#b8b8b8"/></svg>
<div class="t tree" style="left:60px;top:539px">NewCarrier</div>
<svg class="a" style="left:39px;top:538px" width="16" height="13" viewBox="0 0 16 13"><path d="M0.5 0.5 H6 L7.5 2 H15.5 V11.5 H0.5 Z" fill="#ffd24a" stroke="#1e0c00" stroke-width="1"/><rect x="8" y="2" width="7" height="1" fill="#f0a020"/><rect x="1" y="10" width="14" height="1" fill="#c9a12a"/><rect x="1" y="12" width="15" height="1" fill="#b8b8b8"/></svg>
<div class="t tree" style="left:60px;top:555px">Oscar</div>
<svg class="a" style="left:39px;top:554px" width="16" height="13" viewBox="0 0 16 13"><path d="M0.5 0.5 H6 L7.5 2 H15.5 V11.5 H0.5 Z" fill="#ffd24a" stroke="#1e0c00" stroke-width="1"/><rect x="8" y="2" width="7" height="1" fill="#f0a020"/><rect x="1" y="10" width="14" height="1" fill="#c9a12a"/><rect x="1" y="12" width="15" height="1" fill="#b8b8b8"/></svg>
<div class="t tree" style="left:60px;top:571px">Progressive</div>
<svg class="a" style="left:39px;top:570px" width="16" height="13" viewBox="0 0 16 13"><path d="M0.5 0.5 H6 L7.5 2 H15.5 V11.5 H0.5 Z" fill="#ffd24a" stroke="#1e0c00" stroke-width="1"/><rect x="8" y="2" width="7" height="1" fill="#f0a020"/><rect x="1" y="10" width="14" height="1" fill="#c9a12a"/><rect x="1" y="12" width="15" height="1" fill="#b8b8b8"/></svg>
<div class="t tree" style="left:60px;top:587px">Regence</div>
<svg class="a" style="left:39px;top:586px" width="16" height="13" viewBox="0 0 16 13"><path d="M0.5 0.5 H6 L7.5 2 H15.5 V11.5 H0.5 Z" fill="#ffd24a" stroke="#1e0c00" stroke-width="1"/><rect x="8" y="2" width="7" height="1" fill="#f0a020"/><rect x="1" y="10" width="14" height="1" fill="#c9a12a"/><rect x="1" y="12" width="15" height="1" fill="#b8b8b8"/></svg>
<div class="t tree" style="left:60px;top:603px">Safeco</div>
<svg class="a" style="left:39px;top:602px" width="16" height="13" viewBox="0 0 16 13"><path d="M0.5 0.5 H6 L7.5 2 H15.5 V11.5 H0.5 Z" fill="#ffd24a" stroke="#1e0c00" stroke-width="1"/><rect x="8" y="2" width="7" height="1" fill="#f0a020"/><rect x="1" y="10" width="14" height="1" fill="#c9a12a"/><rect x="1" y="12" width="15" height="1" fill="#b8b8b8"/></svg>
<div class="t tree" style="left:60px;top:619px">Select Health</div>
<svg class="a" style="left:39px;top:618px" width="16" height="13" viewBox="0 0 16 13"><path d="M0.5 0.5 H6 L7.5 2 H15.5 V11.5 H0.5 Z" fill="#ffd24a" stroke="#1e0c00" stroke-width="1"/><rect x="8" y="2" width="7" height="1" fill="#f0a020"/><rect x="1" y="10" width="14" height="1" fill="#c9a12a"/><rect x="1" y="12" width="15" height="1" fill="#b8b8b8"/></svg>
<div class="t tree" style="left:60px;top:635px">United Health Care</div>
<svg class="a" style="left:39px;top:634px" width="16" height="13" viewBox="0 0 16 13"><path d="M0.5 0.5 H6 L7.5 2 H15.5 V11.5 H0.5 Z" fill="#ffd24a" stroke="#1e0c00" stroke-width="1"/><rect x="8" y="2" width="7" height="1" fill="#f0a020"/><rect x="1" y="10" width="14" height="1" fill="#c9a12a"/><rect x="1" y="12" width="15" height="1" fill="#b8b8b8"/></svg>
<div class="t tree" style="left:60px;top:651px">Wellpoint Inc. Group</div>
<svg class="a" style="left:39px;top:650px" width="16" height="13" viewBox="0 0 16 13"><path d="M0.5 0.5 H6 L7.5 2 H15.5 V11.5 H0.5 Z" fill="#ffd24a" stroke="#1e0c00" stroke-width="1"/><rect x="8" y="2" width="7" height="1" fill="#f0a020"/><rect x="1" y="10" width="14" height="1" fill="#c9a12a"/><rect x="1" y="12" width="15" height="1" fill="#b8b8b8"/></svg>

<!-- right panel -->
<div class="a" style="left:227px;top:82px;width:513px;height:608px;background:#a3b4cc;box-shadow:inset 1px 1px #8a8a8a,inset 2px 2px #6a6a6a"></div>
<div class="a" style="left:228px;top:84px;width:512px;height:1px;background:#636363"></div>

<!-- policy term grid -->
<div class="a" style="left:277px;top:92px;width:425px;height:88px;background:#f0f0f0;border:1px solid #646464;border-right:2px solid #646464;border-bottom:2px solid #646464"></div>
<div class="a" style="left:278px;top:107px;width:407px;height:1px;background:#000"></div><div class="a" style="left:278px;top:106px;width:407px;height:1px;background:#5a5a5a"></div>
<div class="a" style="left:685px;top:106px;width:16px;height:2px;background:#8c8c8c"></div>
<div class="a" style="left:278px;top:134px;width:407px;height:15px;background:#000"></div>
<div class="a" style="left:380px;top:108px;width:1px;height:41px;background:#000"></div>
<div class="a" style="left:483px;top:108px;width:1px;height:41px;background:#000"></div>
<div class="a" style="left:586px;top:108px;width:1px;height:41px;background:#000"></div>
<div class="a" style="left:380px;top:134px;width:1px;height:15px;background:#808080"></div>
<div class="a" style="left:483px;top:134px;width:1px;height:15px;background:#808080"></div>
<div class="a" style="left:586px;top:134px;width:1px;height:15px;background:#808080"></div>
<div class="t b12" style="left:432px;top:95px">Select A Policy Term</div>
<div class="t b12" style="left:280px;top:115.3px">Effective Date</div>
<div class="t b12" style="left:383px;top:115.3px">Renewal Date</div>
<div class="t b12" style="left:486px;top:115.3px">Status</div>
<div class="t b12" style="left:589px;top:115.3px">Term #</div>
<div class="t v12" style="left:279.5px;top:137.1px;transform:scaleX(0.96);color:#fff">6/1/2025</div>
<div class="t v12" style="left:382.5px;top:137.1px;transform:scaleX(0.96);color:#fff">6/1/2026</div>
<div class="t v12" style="left:485.5px;top:137.1px;transform:scaleX(0.96);color:#fff">Active</div>
<div class="t v12" style="left:588.5px;top:137.1px;transform:scaleX(0.96);color:#fff">1</div>
<!-- scrollbar -->
<div class="a dith" style="left:685px;top:108px;width:16px;height:71px"></div>
<div class="a raised" style="left:685px;top:108px;width:16px;height:16px"></div>
<div class="a raised" style="left:685px;top:125px;width:16px;height:16px"></div>
<div class="a raised" style="left:685px;top:163px;width:16px;height:16px"></div>
<svg class="a" style="left:685px;top:108px" width="16" height="71"><path d="M5 10 H12 L8.5 6 Z" fill="#000"/><path d="M5 61 H12 L8.5 65 Z" fill="#000"/></svg>

<!-- Policy Information group -->
<div class="a" style="left:245px;top:188px;width:489px;height:303px;background:#d1dae6"></div>
<div class="a etch" style="left:245px;top:194px;width:488px;height:170px"></div>
<div class="a" style="left:251px;top:190px;width:109px;height:10px;background:#d1dae6"></div>
<div class="t b12" style="left:254px;top:189.5px;font-size:11.9px">Policy Information</div>

<div class="t f11" style="left:252px;top:214px">Policy Number:</div>
<div class="t f11" style="left:252px;top:238px">Policy Status:</div>
<div class="t f11" style="left:252px;top:265px">Policy Origination Date:</div>
<div class="t f11" style="left:252px;top:287px">Term Effective Date:</div>
<div class="t f11" style="left:253px;top:312px"># Of Months In A Term:</div>
<div class="t f11" style="left:252px;top:335px">Pay Agents:</div>

<div class="a tb" style="left:333px;top:211px;width:128px;height:19px"></div>
<div class="t v12" style="left:335.9px;top:214.8px;transform:scaleX(0.918)">55551613</div>
<div class="a tb" style="left:333px;top:234px;width:129px;height:21px"></div>
<div class="a raised" style="left:443px;top:236px;width:17px;height:17px"></div>
<div class="t v12" style="left:336.4px;top:239.1px;transform:scaleX(0.948)">Active</div>
<div class="a tb" style="left:379px;top:260px;width:82px;height:18px"></div>
<div class="t v12" style="left:381.7px;top:263.9px;transform:scaleX(1.006)">6/1/2025</div>
<div class="a tb" style="left:379px;top:284px;width:82px;height:18px"></div>
<div class="t v12" style="left:381.7px;top:287.8px;transform:scaleX(1.006)">6/1/2025</div>
<div class="a tb" style="left:379px;top:309px;width:82px;height:18px"></div>
<div class="t v12" style="left:359.9px;top:312.8px;width:100px;text-align:right;transform:scaleX(0.962);transform-origin:100% 0">12</div>

<div class="a radio" style="left:334px;top:334px"></div>
<div class="a" style="left:338px;top:338px;width:4px;height:4px;border-radius:2px;background:#939393"></div>
<div class="t f11" style="left:350px;top:335px">Always</div>
<div class="a radio" style="left:398px;top:334px"></div>
<div class="t f11" style="left:414px;top:335px">One-time</div>

<div class="t f11" style="left:471px;top:214px">Client:</div>
<div class="t f11" style="left:471px;top:239px">Type:</div>
<div class="t f11" style="left:471px;top:263px">Carrier:</div>
<div class="t f11" style="left:471px;top:287.3px">Revenue Group:</div>
<div class="t f11" style="left:471px;top:312px">Primary Agent:</div>
<div class="t f11" style="left:471px;top:335px">Agent ID Assigned By Carrier</div>

<div class="a tb" style="left:520px;top:210px;width:208px;height:21px"></div>
<div class="a raised" style="left:709px;top:212px;width:17px;height:17px"></div>
<svg class="a" style="left:714px;top:218px" width="7" height="4"><path d="M0 0h7l-3.5 4z"/></svg>
<div class="t v12" style="left:525.5px;top:215.4px;transform:scaleX(0.903)">ABC</div>
<div class="a tb" style="left:520px;top:235px;width:208px;height:20px"></div>
<div class="a raised" style="left:709px;top:237px;width:17px;height:16px"></div>
<svg class="a" style="left:714px;top:243px" width="7" height="4"><path d="M0 0h7l-3.5 4z"/></svg>
<div class="t v12" style="left:526.1px;top:238.9px;transform:scaleX(0.863)">Clear Plan</div>
<div class="a tb" style="left:520px;top:259px;width:208px;height:21px"></div>
<div class="a raised" style="left:709px;top:261px;width:17px;height:17px"></div>
<svg class="a" style="left:714px;top:267px" width="7" height="4"><path d="M0 0h7l-3.5 4z"/></svg>
<div class="t v12" style="left:525.5px;top:264.3px;transform:scaleX(0.875)">ACST</div>
<div class="a tb" style="left:552px;top:284px;width:176px;height:20px"></div>
<div class="a raised" style="left:709px;top:286px;width:17px;height:16px"></div>
<svg class="a" style="left:714px;top:292px" width="7" height="4"><path d="M0 0h7l-3.5 4z"/></svg>
<div class="a tb" style="left:552px;top:309px;width:176px;height:20px"></div>
<div class="a raised" style="left:709px;top:311px;width:17px;height:16px"></div>
<svg class="a" style="left:714px;top:317px" width="7" height="4"><path d="M0 0h7l-3.5 4z"/></svg>
<div class="t v12" style="left:557.8px;top:313.2px;transform:scaleX(0.891)">Frost, Jack</div>
<div class="a tb" style="left:612px;top:331px;width:116px;height:20px"></div>

<!-- Carrier Payment Details group -->
<div class="a etch" style="left:245px;top:370px;width:487px;height:122px"></div>
<div class="a" style="left:251px;top:366px;width:139px;height:10px;background:#d1dae6"></div>
<div class="t b12" style="left:254px;top:365.5px;font-size:12px">Carrier Payment Details</div>

<div class="t f11" style="left:252px;top:393px">Term Number:</div>
<div class="t f11" style="left:252px;top:417px">Premium Per Pmt:$</div>
<div class="t f11" style="left:253px;top:441px"># Of Payments/Term:</div>
<div class="t f11" style="left:253px;top:465px"># Of Pmts Paid In Advance:</div>
<div class="a tb" style="left:357px;top:388px;width:83px;height:18px"></div>
<div class="t v12" style="left:336.9px;top:391.6px;width:100px;text-align:right;transform:scaleX(0.900);transform-origin:100% 0">1</div>
<div class="a tb" style="left:357px;top:412px;width:83px;height:18px"></div>
<div class="t v12" style="left:338.1px;top:415.6px;width:100px;text-align:right;transform:scaleX(0.958);transform-origin:100% 0">.00</div>
<div class="a tb" style="left:357px;top:436px;width:83px;height:19px"></div>
<div class="t v12" style="left:338.1px;top:439.8px;width:100px;text-align:right;transform:scaleX(0.962);transform-origin:100% 0">12</div>
<div class="a tb" style="left:391px;top:460px;width:49px;height:21px"></div>
<div class="a raised" style="left:421px;top:462px;width:17px;height:17px"></div>
<div class="t v12" style="left:395.3px;top:465.0px;transform:scaleX(0.900)">1</div>

<div class="a radio" style="left:454px;top:382px"></div>
<div class="t f11" style="left:470px;top:383px">Carrier Table:</div>
<div class="a" style="left:560px;top:380px;width:166px;height:20px;background:#e8e8e8;box-shadow:inset 1px 1px #a0a0a0,inset -1px -1px #fff,inset 2px 2px #bcbcbc"></div>
<div class="a" style="left:707px;top:382px;width:17px;height:16px;background:#eaeaea;box-shadow:inset 1px 1px #fff,inset -1px -1px #a0a0a0"></div>
<div class="t v12" style="left:565.3px;top:385.0px;transform:scaleX(0.888);color:#8d8d8d">System - None</div>
<div class="a raised" style="left:560px;top:404px;width:57px;height:20px"></div>
<div class="t f11" style="left:572px;top:408px">De<u>t</u>ails</div>
<div class="a radio" style="left:454px;top:438px"></div>
<div class="a" style="left:458px;top:442px;width:4px;height:4px;border-radius:2px;background:#939393"></div>
<div class="t f11" style="left:470px;top:439px">Expected Commission Per Pmt: $</div>
<div class="a tb" style="left:645px;top:436px;width:83px;height:19px"></div>
<div class="t v12" style="left:625.7px;top:440.2px;width:100px;text-align:right;transform:scaleX(0.913);transform-origin:100% 0">25.00</div>

<!-- split nav -->
<div class="a raised" style="left:352px;top:540px;width:85px;height:20px"></div>
<div class="t f11" style="left:357px;top:545px">&lt; Previous Split</div>
<div class="a" style="left:437px;top:540px;width:85px;height:20px;background:#e3e3e3;box-shadow:inset 1px 1px #8a8a8a,inset -1px -1px #fff"></div>
<div class="t f11" style="left:457px;top:543.7px">Jun 2025</div>
<div class="a" style="left:522px;top:540px;width:85px;height:20px;background:#f0f0f0;box-shadow:inset 1px 1px #fff,inset -1px -1px #696969,inset -2px -2px #a0a0a0"></div>
<div class="t f11" style="left:535px;top:545px;color:#a0a0a0">Next Split &gt;</div>
<div class="a" style="left:620px;top:540px;width:98px;height:20px;background:#d8d8d8;box-shadow:inset 1px 1px #fff,inset -1px -1px #696969,inset -2px -2px #a0a0a0"></div>
<div class="t f11" style="left:636px;top:545px">Add New Split</div>

<!-- split grid -->
<div class="a" style="left:237px;top:564px;width:497px;height:121px;background:#f0f0f0;border:1px solid #646464;border-right:2px solid #646464;border-bottom:2px solid #646464"></div>
<div class="a" style="left:238px;top:578px;width:476px;height:2px;background:#000"></div>
<div class="a" style="left:238px;top:606px;width:476px;height:1px;background:#000"></div>
<div class="a" style="left:275px;top:607px;width:439px;height:30px;background:#fff"></div>
<div class="a" style="left:274px;top:621px;width:440px;height:1px;background:#808080"></div>
<div class="a" style="left:274px;top:636px;width:440px;height:1px;background:#808080"></div>
<div class="a" style="left:238px;top:621px;width:36px;height:1px;background:#000"></div>
<div class="a" style="left:238px;top:636px;width:36px;height:1px;background:#000"></div>
<div class="a" style="left:274px;top:580px;width:1px;height:57px;background:#000"></div>
<div class="a" style="left:397px;top:580px;width:1px;height:26px;background:#000"></div>
<div class="a" style="left:477px;top:580px;width:1px;height:26px;background:#000"></div>
<div class="a" style="left:557px;top:580px;width:1px;height:26px;background:#000"></div>
<div class="a" style="left:637px;top:580px;width:1px;height:26px;background:#000"></div>
<div class="a" style="left:713px;top:580px;width:1px;height:26px;background:#000"></div>
<div class="a" style="left:397px;top:607px;width:1px;height:30px;background:#808080"></div>
<div class="a" style="left:477px;top:607px;width:1px;height:30px;background:#808080"></div>
<div class="a" style="left:557px;top:607px;width:1px;height:30px;background:#808080"></div>
<div class="a" style="left:637px;top:607px;width:1px;height:30px;background:#808080"></div>
<div class="a" style="left:713px;top:607px;width:1px;height:30px;background:#808080"></div>
<div class="t b12" style="left:402px;top:567px">Agent Commission Split Table</div>
<div class="t b12" style="left:276.5px;top:586px">Agent Name</div>
<div class="t b12" style="left:400px;top:581.5px;font-size:11px;line-height:12.3px">Commission<br>Total - 15</div>
<div class="t b12" style="left:480px;top:581.5px;font-size:11px;line-height:12.3px">Override<br>Total - 0</div>
<div class="t b12" style="left:560px;top:581.5px;font-size:11px;line-height:12.3px">Bonus<br>Total - 0</div>
<div class="t b12" style="left:640px;top:581.5px;font-size:11px;line-height:12.3px">Commission<br>Type</div>
<div class="t f11" style="left:277px;top:609px">Frost, Jack</div>
<div class="a raised" style="left:380px;top:608px;width:16px;height:13px"></div>
<div class="t f11" style="left:400px;top:609px">15</div>
<div class="t f11" style="left:480px;top:609px">0</div>
<div class="t f11" style="left:560px;top:609px">0</div>
<div class="t f11" style="left:640px;top:609px">dollars</div>
<svg class="a" style="left:236px;top:600px" width="38" height="40"><path d="M254 609 L260.5 614.5 L254 620 Z" transform="translate(-236,-600)" fill="#000"/><path d="M256.5 624.5 V634.5 M251.5 629.5 H261.5 M253 626 L260 633 M260 626 L253 633" transform="translate(-236,-600)" stroke="#000" stroke-width="1.2"/></svg>
<div class="a dith" style="left:717px;top:581px;width:16px;height:102px"></div>
<div class="a raised" style="left:717px;top:581px;width:16px;height:16px"></div>
<div class="a raised" style="left:717px;top:597px;width:16px;height:16px"></div>
<div class="a raised" style="left:717px;top:667px;width:16px;height:16px"></div>
<svg class="a" style="left:717px;top:581px" width="16" height="103"><path d="M4.5 10 H11.5 L8 6 Z" fill="#000"/><path d="M4.5 92 H11.5 L8 96 Z" fill="#000"/></svg>

<!-- toolbar icons -->
<svg class="a" style="left:115px;top:45px" width="16" height="16" viewBox="0 0 16 16"><rect width="16" height="16" fill="#fff"/><path d="M2.5 12 C0.3 11.5 0.3 8 2.8 7.3 C3 4 3.8 1.8 6.5 1.8 C8 1.8 9 2.3 9.8 3.3 C12 3.3 13.5 5 13.7 7 C15.8 7.8 15.8 11.2 13.5 12 Z" fill="#eef2fb" stroke="#000" stroke-width="1.4"/><rect x="4" y="8" width="8.5" height="7" fill="#0a1a5a"/><rect x="5.2" y="10.5" width="6.3" height="3.5" fill="#f7b733"/><rect x="4.8" y="8.8" width="2" height="1.2" fill="#ff6020"/></svg>
<svg class="a" style="left:238px;top:45px" width="14" height="16" viewBox="0 0 14 16"><path d="M2.5 1 H11.5 Q13 1 13 2.5 V11 L9 15 H2.5 Q1 15 1 13.5 V2.5 Q1 1 2.5 1 Z" fill="#fff" stroke="#000" stroke-width="2"/><rect x="3" y="3.5" width="4" height="1.6" fill="#000"/><rect x="7" y="3.5" width="4" height="1.6" fill="#777"/><rect x="3" y="6" width="8" height="1" fill="#000"/><rect x="3" y="8" width="8" height="1" fill="#000"/><rect x="3" y="10" width="3.5" height="1.6" fill="#000"/><path d="M8.5 15 V11.5 Q8.5 10.5 9.5 10.5 H13" fill="#555" stroke="#000" stroke-width="1.2"/></svg>
<svg class="a" style="left:359px;top:45px" width="17" height="16" viewBox="0 0 17 16"><rect x="0" y="0" width="17" height="16" fill="#fff"/><rect x="3" y="0" width="11" height="6.5" fill="#000"/><rect x="5.8" y="2" width="1" height="3" fill="#fff"/><rect x="9.8" y="3" width="1" height="1" fill="#fff"/><rect x="0" y="5.5" width="16.5" height="2" fill="#000"/><rect x="0" y="6" width="1.6" height="10" fill="#000"/><path d="M1.5 8 L15.5 15.2 M13.5 8 L1 15.5" stroke="#000" stroke-width="2"/></svg>
<svg class="a" style="left:482px;top:45px" width="14" height="16" viewBox="0 0 14 16"><path d="M2.5 1 H11.5 Q13 1 13 2.5 V11 L9 15 H2.5 Q1 15 1 13.5 V2.5 Q1 1 2.5 1 Z" fill="#fff" stroke="#000" stroke-width="2"/><rect x="3" y="3.5" width="4" height="1.6" fill="#000"/><rect x="7" y="3.5" width="4" height="1.6" fill="#777"/><rect x="3" y="6" width="8" height="1" fill="#000"/><rect x="3" y="8" width="8" height="1" fill="#000"/><rect x="3" y="10" width="3.5" height="1.6" fill="#000"/><path d="M8.5 15 V11.5 Q8.5 10.5 9.5 10.5 H13" fill="#555" stroke="#000" stroke-width="1.2"/></svg>
<svg class="a" style="left:604px;top:45px" width="14" height="16" viewBox="0 0 14 16"><path d="M2.5 1 H11.5 Q13 1 13 2.5 V11 L9 15 H2.5 Q1 15 1 13.5 V2.5 Q1 1 2.5 1 Z" fill="#fff" stroke="#000" stroke-width="2"/><rect x="3" y="3.5" width="4" height="1.6" fill="#000"/><rect x="7" y="3.5" width="4" height="1.6" fill="#777"/><rect x="3" y="6" width="8" height="1" fill="#000"/><rect x="3" y="8" width="8" height="1" fill="#000"/><rect x="3" y="10" width="3.5" height="1.6" fill="#000"/><path d="M8.5 15 V11.5 Q8.5 10.5 9.5 10.5 H13" fill="#555" stroke="#000" stroke-width="1.2"/></svg>
<!-- left buttons icons -->
<svg class="a" style="left:25px;top:90px" width="16" height="16" viewBox="0 0 16 16"><rect width="16" height="16" fill="#fff"/><ellipse cx="8" cy="5" rx="4" ry="4.3" fill="#f5c99e"/><path d="M4 5 Q3.8 0.3 8 0.3 Q12.2 0.3 12 5 Q11.5 2.3 8 2.3 Q4.5 2.3 4 5Z" fill="#6e4b3b"/><path d="M2.5 16 L3.3 11.5 Q4 9.5 6.5 9.3 H9.5 Q12 9.5 12.7 11.5 L13.5 16 Z" fill="#2f3b5f"/><path d="M7.3 9.3 H8.7 L8.8 16 H7.2 Z" fill="#d2272b"/></svg>
<svg class="a" style="left:72px;top:90px" width="16" height="16" viewBox="0 0 16 16"><rect width="16" height="16" fill="#fff"/><path d="M8.6 3 Q9 0 12 0 Q15.3 0 15.5 3.5 L15.5 9 H8.8 Z" fill="#2b2b3a"/><circle cx="4.3" cy="4.6" r="3.1" fill="#e0a070"/><path d="M1 4.5 Q0.8 0.2 4.3 0.2 Q7.8 0.2 7.6 4 Q6.5 2 4.3 2.2 Q2.3 2.3 1 4.5Z" fill="#222230"/><ellipse cx="12" cy="4.6" rx="2.8" ry="3.1" fill="#f3c89e"/><path d="M0 16 V11 Q0.3 8.7 3 8.5 H5.5 Q8 8.7 8.3 11 V16Z" fill="#4aaee6"/><path d="M7.8 16 V11 Q8 8.7 10.5 8.5 H13.5 Q15.8 8.7 16 11 V16Z" fill="#da2f2f"/><rect x="0" y="14" width="1.5" height="2" fill="#e0a070"/><rect x="14.5" y="14" width="1.5" height="2" fill="#f3c89e"/></svg>
<svg class="a" style="left:120px;top:91px" width="17" height="16" viewBox="0 0 17 16"><defs><clipPath id="shB"><path d="M8.5 0 L17 4.3 L16 5.5 L16 9.5 Q15 12.5 8.5 16 Q2 12.5 1 9.5 L1 5.5 L0 4.3 Z"/></clipPath><linearGradient id="shBg" x1="0" y1="0" x2="0" y2="1"><stop offset="0" stop-color="#3a90d2"/><stop offset="1" stop-color="#6858b0"/></linearGradient></defs><g clip-path="url(#shB)"><rect width="17" height="16" fill="#1a8ed6"/><rect y="5.5" width="17" height="1.6" fill="#2f8f7a"/><rect y="7.3" width="17" height="1.4" fill="#2a10c0"/><rect y="8.7" width="17" height="7.3" fill="url(#shBg)"/><path d="M1 9.5 Q2 12.5 8.5 16 Q15 12.5 16 9.5" fill="none" stroke="#000080" stroke-width="1.6"/></g><rect x="5.5" y="4" width="1" height="1" fill="#bfefff"/><rect x="11" y="4" width="1" height="1" fill="#bfefff"/><rect x="8" y="2.6" width="1" height="1" fill="#7fdfff"/></svg>
<svg class="a" style="left:165px;top:90px" width="18" height="16" viewBox="0 0 18 16"><defs><linearGradient id="lens" x1="0" y1="0" x2="1" y2="1"><stop offset="0" stop-color="#b8e0a8"/><stop offset="1" stop-color="#f0f810"/></linearGradient></defs><path d="M7.5 9 L2.5 14.3" stroke="#e8e820" stroke-width="2.6"/><path d="M7.5 9 L2.5 14.3" stroke="#4a5a6a" stroke-width="1.2"/><circle cx="11" cy="5.9" r="4.6" fill="url(#lens)" stroke="#e0e030" stroke-width="1.4"/><circle cx="11" cy="5.9" r="4.6" fill="none" stroke="#6a7a88" stroke-width="0.8"/></svg>
<!-- inactive / terminated icons -->
<svg class="a" style="left:14px;top:137px" width="16" height="13" viewBox="0 0 16 13"><path d="M0.5 0.5 H6 L7.5 2 H15.5 V12.5 H0.5 Z" fill="#f2344e" stroke="#1a0000" stroke-width="1"/><rect x="8" y="2" width="7" height="1" fill="#f0a020"/></svg>
<svg class="a" style="left:115.5px;top:136.5px" width="12" height="12" viewBox="0 0 12 12"><circle cx="6" cy="6" r="5.8" fill="#000"/><path d="M3.2 3 H8.8 V4.6 H6.9 V9.5 H5.1 V4.6 H3.2 Z" fill="#fff"/></svg>
<!-- dropdown arrows -->
<svg class="a" style="left:0;top:0" width="740" height="690">
<g fill="#000">
<path d="M448 243 h7 l-3.5 4 z"/>
<path d="M426 469 h7 l-3.5 4 z"/>
<path d="M386 612 h7 l-3.5 3.5 z"/>
</g>
<path d="M712 389 h7 l-3.5 4 z" fill="#a0a0a0"/>
</svg>
<!-- arrow -->
<svg class="a" style="left:0;top:0" width="740" height="690">
<defs><filter id="sh" x="-20%" y="-50%" width="140%" height="200%"><feGaussianBlur in="SourceAlpha" stdDeviation="2.5"/><feOffset dx="2" dy="3"/><feComponentTransfer><feFuncA type="linear" slope="0.55"/></feComponentTransfer><feMerge><feMergeNode/><feMergeNode in="SourceGraphic"/></feMerge></filter></defs>
<g filter="url(#sh)" fill="#425afb">
<path d="M129 315.5 L224 299 L222 289 L253.5 298 L227.6 318 L226 309 L130.5 325.5 A5 5 0 0 1 129 315.5 Z"/>
</g>
</svg>

</body></html>
